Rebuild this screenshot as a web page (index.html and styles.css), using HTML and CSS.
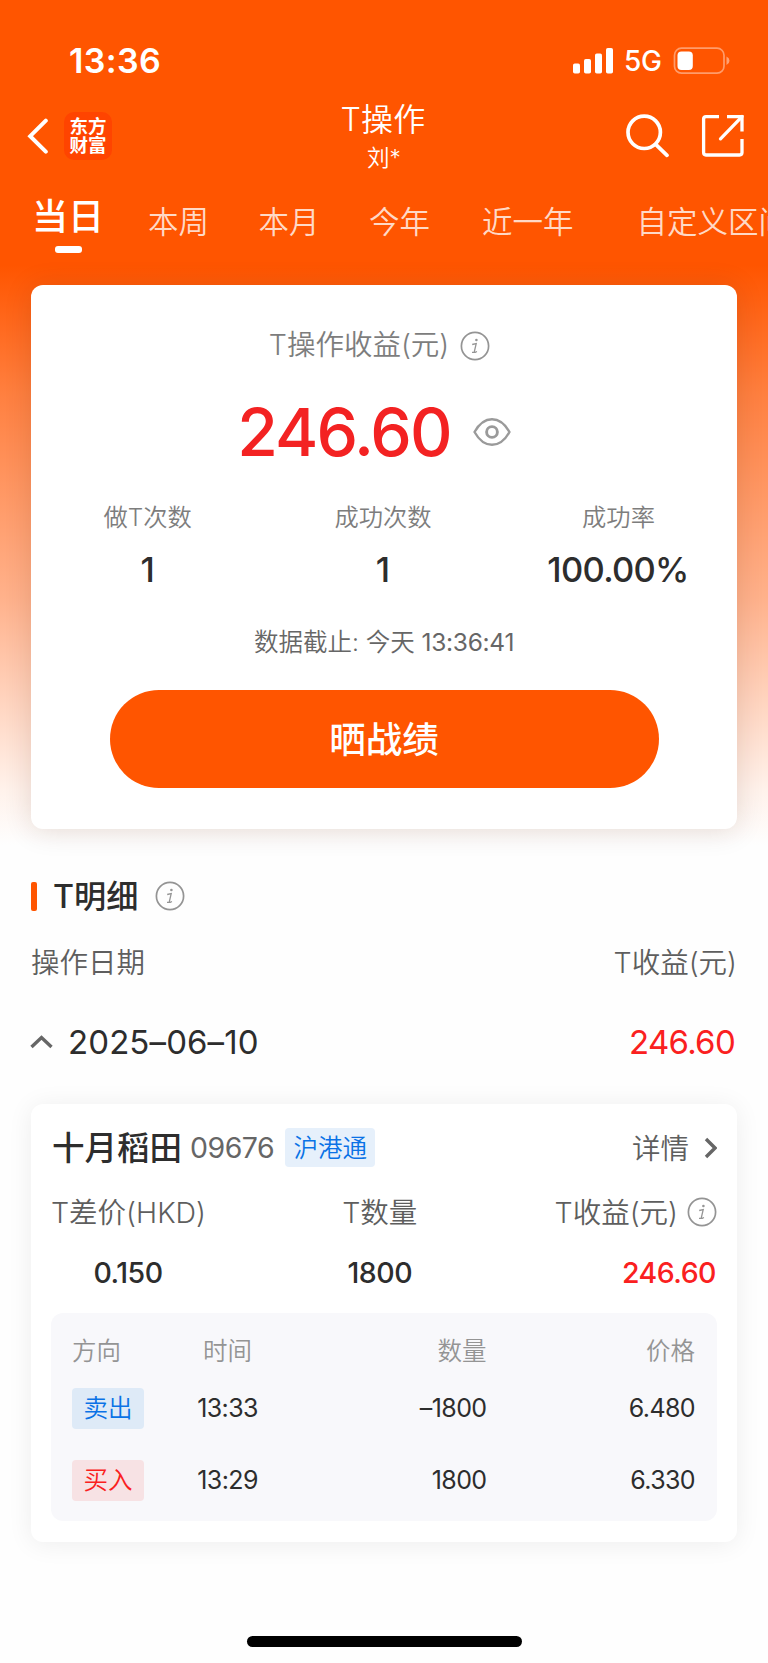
FILE: index.html
```html
<!DOCTYPE html>
<html lang="zh-CN">
<head>
<meta charset="utf-8">
<title>T操作</title>
<link rel="stylesheet" href="styles.css">
</head>
<body>
<svg class="defs" width="0" height="0" aria-hidden="true">
  <symbol id="info" viewBox="0 0 30 30">
    <circle cx="15" cy="15" r="13.6" fill="none" stroke="#949494" stroke-width="1.7"/>
    <circle cx="16.4" cy="9" r="1.3" fill="#949494"/>
    <path d="M12.200 13.500 L16.200 12.700 L14.400 20.400 Q14.200 21.600 15.200 21.300 L17 20.500 M12 21.400 H15" fill="none" stroke="#949494" stroke-width="1.300"/>
  </symbol>
</svg>
<div class="screen">
  <header class="top">
    <div class="status">
      <span class="clock">13:36</span>
      <div class="status-right">
        <svg width="40" height="26" viewBox="0 0 40 26" fill="#fff"><rect x="0" y="15.5" width="7" height="10" rx="1.8"/><rect x="11" y="11" width="7" height="14.5" rx="1.8"/><rect x="22" y="5.5" width="7" height="20" rx="1.8"/><rect x="33" y="0" width="7" height="25.500" rx="1.8"/></svg>
        <span class="net">5G</span>
        <svg width="57" height="28" viewBox="0 0 57 28"><rect x="1.500" y="1.200" width="49.500" height="25" rx="7" fill="none" stroke="#fff" stroke-opacity=".42" stroke-width="1.700"/><rect x="4.500" y="4.500" width="15.300" height="18.500" rx="4" fill="#fff"/><path d="M53.500 9.500 Q56.500 11 56.500 13.700 Q56.500 16.500 53.500 18 Z" fill="#fff" fill-opacity=".45"/></svg>
      </div>
    </div>
    <nav class="nav">
      <div class="nav-left">
        <svg width="22" height="38" viewBox="0 0 22 38"><path d="M18.800 2.700 L3.200 18.200 L18.800 33.700" fill="none" stroke="#fff" stroke-width="4" stroke-linecap="round"/></svg>
        <div class="logo"><span>东方</span><span>财富</span></div>
      </div>
      <div class="nav-title"><h1>T操作</h1><span>刘*</span></div>
      <div class="nav-right">
        <svg width="46" height="46" viewBox="0 0 46 46" fill="none" stroke="#fff" stroke-width="3.700" stroke-linecap="round"><circle cx="21.200" cy="19.300" r="16.200"/><path d="M32.700 31.300 L44 42.300"/></svg>
        <svg width="44" height="44" viewBox="0 0 44 44" fill="none" stroke="#fff" stroke-width="3.300"><path d="M18 2.600 H5 Q2.600 2.600 2.600 5 V38.600 Q2.600 41 5 41 H38.600 Q41 41 41 38.600 V25 M26 2.600 H41 V17.500"/><path d="M41 2.600 L19.500 24.800" stroke-linecap="round"/></svg>
      </div>
    </nav>
    <div class="tabs">
      <span class="tab tab-on">当日</span><span class="tab t2">本周</span><span class="tab t3">本月</span><span class="tab t4">今年</span><span class="tab t5">近一年</span><span class="tab t6">自定义区间</span>
    </div>
  </header>

  <section class="card summary">
    <div class="sum-title"><span>T操作收益(元)</span><svg class="info"><use href="#info"/></svg></div>
    <div class="sum-value"><span class="big">246.60</span>
      <svg width="38" height="30" viewBox="0 0 38 30" fill="none" stroke="#9a9a9a"><path d="M1.500 15 C6 7 12 2.200 19 2.200 S32 7 36.500 15 C32 23 26 27.800 19 27.800 S6 23 1.500 15 Z" stroke-width="2.400" stroke-linejoin="round"/><circle cx="19" cy="15" r="5.400" stroke-width="2.900"/></svg>
    </div>
    <div class="stats">
      <div><span class="lab">做T次数</span><span class="val">1</span></div>
      <div><span class="lab">成功次数</span><span class="val">1</span></div>
      <div><span class="lab">成功率</span><span class="val">100.00%</span></div>
    </div>
    <p class="asof">数据截止: 今天 <span>13:36:41</span></p>
    <button class="share">晒战绩</button>
  </section>

  <div class="sec-head"><i class="mark"></i><h2>T明细</h2><svg class="info"><use href="#info"/></svg></div>
  <div class="cols"><span>操作日期</span><span>T收益(元)</span></div>
  <div class="day">
    <svg width="24" height="14" viewBox="0 0 24 14"><path d="M1.500 12 L11.500 2.500 L21.500 12" fill="none" stroke="#666" stroke-width="3.400"/></svg>
    <span class="date">2025–06–10</span><span class="amount">246.60</span>
  </div>

  <section class="card detail">
    <div class="stock">
      <span class="name">十月稻田</span><span class="code">09676</span><span class="market">沪港通</span>
      <span class="more">详情</span>
      <svg width="14" height="22" viewBox="0 0 14 22"><path d="M3 2 L12 11 L3 20" fill="none" stroke="#666" stroke-width="3.400"/></svg>
    </div>
    <div class="metrics">
      <div class="m1"><span class="lab2">T差价(HKD)</span><span class="val2">0.150</span></div>
      <div class="m2"><span class="lab2">T数量</span><span class="val2">1800</span></div>
      <div class="m3"><span class="lab2">T收益(元)<svg class="info"><use href="#info"/></svg></span><span class="val2 red">246.60</span></div>
    </div>
    <div class="trades">
      <div class="tr th"><span>方向</span><span>时间</span><span>数量</span><span>价格</span></div>
      <div class="tr"><span><b class="tag sell">卖出</b></span><span>13:33</span><span>–1800</span><span>6.480</span></div>
      <div class="tr"><span><b class="tag buy">买入</b></span><span>13:29</span><span>1800</span><span>6.330</span></div>
    </div>
  </section>
  <div class="home"></div>
</div>
</body>
</html>
```
FILE: styles.css
```css
* { box-sizing: border-box; }
body {
  margin: 0;
  background: #fefefe;
  font-family: Inter, "Noto Sans CJK SC", sans-serif;
  font-weight: 350;
  color: #2d2d2d;
}
h1, h2, p { margin: 0; }
svg { display: block; flex: none; }
.defs { position: absolute; }
.info { width: 30px; height: 30px; }
.screen {
  width: 768px;
  height: 1663px;
  overflow: hidden;
  display: flex;
  flex-direction: column;
  background: linear-gradient(#ff5500 0, #ff5500 265px, #ff8040 395px, #ffb28c 600px, #fff2eb 790px, #fefefe 845px);
}
.top { height: 284px; flex: none; color: #fff; display: flex; flex-direction: column; }

.status { height: 98px; padding: 24px 38px 0 69px; display: flex; justify-content: space-between; align-items: center; }
.clock { font-size: 34px; font-weight: 600; letter-spacing: .4px; padding-bottom: 1px; }
.status-right { display: flex; align-items: center; }
.net { font-size: 28px; font-weight: 500; margin: 0 12px 0 11px; width: 37px; letter-spacing: -.3px; }

.nav { height: 78px; display: grid; grid-template-columns: 250px 1fr 250px; }
.nav-left { display: flex; align-items: center; padding-left: 27px; }
.logo {
  width: 48px; height: 48px; margin: -2px 0 0 15px; border-radius: 10px; background: #ff4400;
  display: flex; flex-direction: column; align-items: center; justify-content: center;
  font-size: 18.500px; line-height: 19.500px; font-weight: 700;
}
.nav-title { display: flex; flex-direction: column; align-items: center; }
.nav-title h1 { font-size: 32px; line-height: 44px; font-weight: 350; letter-spacing: .3px; padding-right: 2px; }
.nav-title span { font-size: 22.500px; line-height: 30px; padding-top: 1px; }
.nav-right { display: flex; align-items: center; justify-content: flex-end; gap: 32px; padding: 0 23px 3px 0; }

.tabs { height: 108px; padding-left: 32px; display: flex; white-space: nowrap; }
.tab { font-size: 30.500px; line-height: 40px; padding-top: 26px; color: #ffd9c6; flex: none; }
.tab-on { font-size: 36px; font-weight: 500; color: #fff; padding-top: 21px; width: 72px; display: flex; flex-direction: column; align-items: center; }
.tab-on::after { content: ""; width: 27px; height: 6.500px; margin-top: 9px; border-radius: 3px; background: #fff; }
.t2 { margin-left: 44px; }
.t3, .t4 { margin-left: 49.500px; }
.t5 { margin-left: 52px; }
.t6 { margin-left: 63px; }

.card { width: 706px; margin: 0 31px; border-radius: 12px; background: #fff; flex: none; }
.summary {
  height: 544px; margin-top: .5px; box-shadow: 0 2px 28px rgba(70, 30, 10, .14);
  display: flex; flex-direction: column; align-items: center;
}
.sum-title { height: 44px; margin-top: 39px; padding-right: 9px; display: flex; align-items: center; gap: 11px; font-size: 28.500px; line-height: 40px; color: #7d7d7d; }
.sum-title span { padding-bottom: 2px; }
.sum-value { height: 78px; margin-top: 25px; display: flex; align-items: center; gap: 22px; padding-right: 20px; }
.big { font-size: 66px; line-height: 78px; font-weight: 500; color: #f32222; letter-spacing: -1.900px; }
.stats { width: 100%; margin-top: 27px; display: grid; grid-template-columns: 233.500px 237px 234px; }
.stats div { display: flex; flex-direction: column; align-items: center; }
.lab { font-size: 24.300px; line-height: 38px; color: #7d7d7d; }
.val { font-size: 34.500px; line-height: 44px; margin-top: 12px; font-weight: 500; letter-spacing: -.7px; padding-right: 1px; }
.asof { margin-top: 31px; font-size: 24.500px; line-height: 38px; color: #666; white-space: nowrap; }
.asof span { font-weight: 400; letter-spacing: -.3px; }
.share { width: 549px; height: 98px; margin-top: 29px; padding: 0 0 2px; border: 0; border-radius: 49px; background: #ff5500; color: #fff; font: 500 36.500px Inter, "Noto Sans CJK SC", sans-serif; }

.sec-head { height: 44px; margin: 45.500px 31px 0; display: flex; align-items: center; }
.mark { width: 6px; height: 29px; border-radius: 2px; background: #ff5500; margin-right: 16px; }
.sec-head h2 { font-size: 32.200px; font-weight: 500; margin-right: 17px; padding-bottom: 4px; }
.cols { height: 40px; margin: 22.500px 31px 0 31px; display: flex; justify-content: space-between; align-items: center; font-size: 28.500px; color: #5e5e5e; }
.day { height: 44px; margin: 39px 33px 0 30px; display: flex; align-items: center; font-size: 33px; font-weight: 400; }
.date { margin-left: 14px; letter-spacing: .1px; }
.amount { margin-left: auto; color: #fa2020; letter-spacing: -.7px; }

.detail { height: 438px; margin-top: 40px; box-shadow: 0 2px 26px rgba(0, 0, 0, .07); padding: 0 20px; }
.stock { height: 88px; display: flex; align-items: center; }
.name { font-size: 32.500px; font-weight: 500; padding: 0 0 4px 1px; }
.code { font-size: 28.500px; font-weight: 400; color: #666; margin-left: 8px; letter-spacing: -.5px; }
.market { width: 90px; height: 39px; border-radius: 4px; background: #e6f0fb; color: #0a72e6; font-size: 24.500px; line-height: 41px; text-align: center; margin-left: 11px; }
.more { margin-left: auto; margin-right: 14px; padding-bottom: 3px; font-size: 28.500px; color: #5e5e5e; }
.metrics { display: flex; justify-content: space-between; height: 121px; }
.metrics > div { display: flex; flex-direction: column; align-items: center; }
.lab2 { display: flex; align-items: center; gap: 10px; height: 42px; margin-top: -2px; font-size: 28.500px; color: #5e5e5e; white-space: nowrap; }
.m2 .lab2 { padding-right: 1px; }
.m3 .lab2 { gap: 9px; }
.m3 .info { margin-top: 2px; }
.val2 { font-size: 28.500px; line-height: 40px; margin-top: 21.500px; font-weight: 500; letter-spacing: -.5px; }
.m1 .val2, .m2 .val2 { padding-right: 1px; }
.metrics .m3 { align-items: flex-end; }
.red { color: #fa2020; padding-right: 1px; }
.trades { height: 208px; border-radius: 12px; background: #f8f8fb; padding: 8px 22px 0 21px; }
.tr { display: grid; grid-template-columns: 112px 89px 213.500px 1fr; align-items: center; height: 72px; font-size: 25px; font-weight: 400; letter-spacing: -.6px; }
.th { font-size: 24.500px; font-weight: 350; color: #949494; height: 51.500px; letter-spacing: 0; }
.th span { padding-top: 6px; }
.tr span:nth-child(2) { text-align: center; padding-right: 2px; }
.tr span:nth-child(n+3) { text-align: right; }
.tag { display: block; width: 72px; height: 41px; border-radius: 4px; text-align: center; font-size: 24.500px; line-height: 41px; font-weight: 350; letter-spacing: 0; }
.sell { background: #deeaf7; color: #0a72e6; }
.buy { background: #f7e2e4; color: #fa2020; }
.home { width: 275px; height: 11px; border-radius: 6px; background: #000; margin: 94px 0 0 247px; flex: none; }
```
